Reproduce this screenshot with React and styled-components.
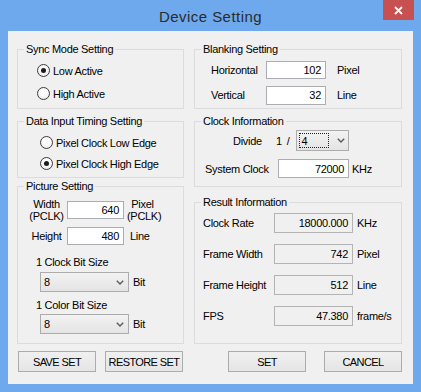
import React from 'react'
import styled, { createGlobalStyle } from 'styled-components'

const GlobalStyle = createGlobalStyle`
html, body {
  margin: 0;
  padding: 0;
  background: #6ea9ee;
}
body {
  font-family: "Liberation Sans", Arial, sans-serif;
  font-size: 11px;
  letter-spacing: -0.3px;
  color: #000;
}
`

const Window = styled.div`
width: 421px;
height: 392px;
box-sizing: border-box;
background: #6ea9ee;
padding: 0 8px 8px;
display: flex;
flex-direction: column;
`

const TitleBar = styled.div`
height: 31px;
display: grid;
grid-template-columns: 1fr auto 1fr;
`

const Title = styled.div`
grid-column: 2;
align-self: center;
margin-top: 1px;
font-size: 15px;
letter-spacing: 0.45px;
color: #2b2b2b;
`

const CloseButton = styled.div`
grid-column: 3;
justify-self: end;
align-self: start;
margin-right: -1px;
width: 31px;
height: 20px;
background: #c75050;
display: flex;
align-items: center;
justify-content: center;
`

const Client = styled.div`
flex: 1;
background: #f0f0f0;
padding: 18px 11px 0 9px;
display: grid;
grid-template-columns: 167px 208px;
column-gap: 10px;
align-content: start;
`

const Column = styled.div`
display: flex;
flex-direction: column;
`

const Group = styled.div`
box-sizing: border-box;
height: ${p => p.$h}px;
margin-bottom: ${p => p.$mb || 0}px;
border: 1px solid #dcdcdc;
`

const Legend = styled.div`
display: table;
margin: -7px 0 0 6px;
padding: 0 2px;
line-height: 13px;
background: #f0f0f0;
`

const RadioList = styled.div`
display: flex;
flex-direction: column;
padding: ${p => p.$pt}px 0 0 ${p => p.$pl}px;
`

const RadioRow = styled.div`
display: flex;
align-items: center;
gap: 3px;
height: ${p => p.$h}px;
`

const RadioCircle = styled.span`
box-sizing: border-box;
width: 13px;
height: 13px;
border-radius: 50%;
border: 1px solid #3c3c3c;
background: radial-gradient(circle at 50% 40%, #ffffff 30%, #e3e3e3 100%);
display: flex;
align-items: center;
justify-content: center;

&::after {
  content: '';
  display: ${p => (p.$on ? 'block' : 'none')};
  width: 5px;
  height: 5px;
  border-radius: 50%;
  background: #1c1c1c;
}
`

const FormGrid = styled.div`
display: grid;
grid-template-columns: ${p => p.$cols};
grid-auto-rows: ${p => p.$rows};
row-gap: ${p => p.$rg}px;
align-items: center;
padding: ${p => p.$pt}px 0 0 ${p => p.$pl}px;
`

const Label = styled.div`
line-height: 12px;
text-align: ${p => p.$align || 'left'};
padding-left: ${p => p.$pl || 0}px;
`

const Field = styled.div`
box-sizing: border-box;
width: ${p => p.$w}px;
height: ${p => p.$h}px;
border: 1px solid ${p => (p.$ro ? '#b4b4b4' : '#abadb3')};
background: ${p => (p.$ro ? '#f0f0f0' : '#ffffff')};
display: flex;
align-items: center;
justify-content: flex-end;
padding-right: 4px;
`

const SubLabel = styled.div`
line-height: 14px;
margin-top: ${p => p.$mt}px;
padding-left: 18px;
`

const ComboRow = styled.div`
display: flex;
align-items: center;
gap: 4px;
margin-top: ${p => p.$mt}px;
padding-left: 22px;
`

const Combo = styled.div`
box-sizing: border-box;
width: ${p => p.$w}px;
height: ${p => p.$h}px;
border: 1px solid #acacac;
background: linear-gradient(#f2f2f2, #e4e4e4);
display: flex;
align-items: center;
justify-content: space-between;
padding: 0 ${p => p.$pr}px 0 ${p => p.$pl}px;
`

const FocusBox = styled.span`
box-sizing: border-box;
width: 30px;
height: 15px;
border: 1px dotted #222;
display: flex;
align-items: center;
padding-left: 2px;
`

const Row = styled.div`
display: flex;
align-items: center;
height: ${p => p.$h}px;
margin-top: ${p => p.$mt}px;
padding-left: ${p => p.$pl}px;
`

const Text = styled.span`
margin-left: ${p => p.$ml || 0}px;
width: ${p => (p.$w ? `${p.$w}px` : 'auto')};
flex: none;
`

const ButtonBar = styled.div`
grid-column: ${p => p.$col};
display: flex;
justify-content: ${p => p.$justify};
gap: ${p => p.$gap}px;
margin-top: 7px;
padding-left: ${p => p.$pl || 0}px;
`

const Button = styled.div`
box-sizing: border-box;
width: 78px;
height: 21px;
border: 1px solid #acacac;
background: linear-gradient(#f0f0f0, #e5e5e5);
display: flex;
align-items: center;
justify-content: center;
letter-spacing: -0.6px;
`

const Chevron = () => (
  <svg width="8" height="5" viewBox="0 0 8 5">
    <path d="M0.8 0.8 L4 4 L7.2 0.8" fill="none" stroke="#5a5a5a" strokeWidth="1.4" />
  </svg>
)

const Radio = ({ on, h, children }) => (
  <RadioRow $h={h}>
    <RadioCircle $on={on} />
    <span>{children}</span>
  </RadioRow>
)

const resultRows = [
  ['Clock Rate', '18000.000', 'KHz'],
  ['Frame Width', '742', 'Pixel'],
  ['Frame Height', '512', 'Line'],
  ['FPS', '47.380', 'frame/s'],
]

const App = () => (
  <Window>
    <GlobalStyle />
    <TitleBar>
      <Title>Device Setting</Title>
      <CloseButton>
        <svg width="9" height="9" viewBox="0 0 9 9">
          <path d="M1 1 L8 8 M8 1 L1 8" stroke="#fff" strokeWidth="1.8" />
        </svg>
      </CloseButton>
    </TitleBar>
    <Client>
      <Column>
        <Group $h={60} $mb={12}>
          <Legend>Sync Mode Setting</Legend>
          <RadioList $pt={3} $pl={19}>
            <Radio on h={23}>Low Active</Radio>
            <Radio h={23}>High Active</Radio>
          </RadioList>
        </Group>
        <Group $h={57} $mb={8}>
          <Legend>Data Input Timing Setting</Legend>
          <RadioList $pt={4} $pl={22}>
            <Radio h={21}>Pixel Clock Low Edge</Radio>
            <Radio on h={21}>Pixel Clock High Edge</Radio>
          </RadioList>
        </Group>
        <Group $h={158}>
          <Legend>Picture Setting</Legend>
          <FormGrid $cols="41px 60px 31px" $rows="auto" $rg={5} $pt={5} $pl={8}>
            <Label $align="center">Width<br />(PCLK)</Label>
            <Field $w={57} $h={18}>640</Field>
            <Label $align="center">Pixel<br />(PCLK)</Label>
            <Label $align="center">Height</Label>
            <Field $w={57} $h={18}>480</Field>
            <Label $pl={3}>Line</Label>
          </FormGrid>
          <SubLabel $mt={10}>1 Clock Bit Size</SubLabel>
          <ComboRow $mt={3}>
            <Combo $w={89} $h={20} $pl={3} $pr={4}>
              <span>8</span>
              <Chevron />
            </Combo>
            <span>Bit</span>
          </ComboRow>
          <SubLabel $mt={6}>1 Color Bit Size</SubLabel>
          <ComboRow $mt={2}>
            <Combo $w={89} $h={20} $pl={3} $pr={4}>
              <span>8</span>
              <Chevron />
            </Combo>
            <span>Bit</span>
          </ComboRow>
        </Group>
      </Column>

      <Column>
        <Group $h={60} $mb={12}>
          <Legend>Blanking Setting</Legend>
          <FormGrid $cols="55px 60px auto" $rows="18px" $rg={7} $pt={5} $pl={16}>
            <Label>Horizontal</Label>
            <Field $w={60} $h={18}>102</Field>
            <Label $pl={11}>Pixel</Label>
            <Label>Vertical</Label>
            <Field $w={60} $h={19}>32</Field>
            <Label $pl={11}>Line</Label>
          </FormGrid>
        </Group>
        <Group $h={66} $mb={15}>
          <Legend>Clock Information</Legend>
          <Row $h={21} $mt={2} $pl={38}>
            <Text $w={29}>Divide</Text>
            <Text $ml={14}>1</Text>
            <Text $ml={5}>/</Text>
            <Combo $w={53} $h={21} $pl={2} $pr={3} style={{ marginLeft: 6 }}>
              <FocusBox>4</FocusBox>
              <Chevron />
            </Combo>
          </Row>
          <Row $h={19} $mt={8} $pl={10}>
            <Text $w={73}>System Clock</Text>
            <Field $w={71} $h={19}>72000</Field>
            <Text $ml={3}>KHz</Text>
          </Row>
        </Group>
        <Group $h={142}>
          <Legend>Result Information</Legend>
          <FormGrid $cols="71px 79px auto" $rows="20px" $rg={11} $pt={4} $pl={8}>
            {resultRows.map(([label, value, unit]) => (
              <React.Fragment key={label}>
                <Label>{label}</Label>
                <Field $ro $w={79} $h={20}>{value}</Field>
                <Label $pl={4}>{unit}</Label>
              </React.Fragment>
            ))}
          </FormGrid>
        </Group>
      </Column>

      <ButtonBar $col={1} $justify="flex-start" $gap={9} $pl={1}>
        <Button>SAVE SET</Button>
        <Button>RESTORE SET</Button>
      </ButtonBar>
      <ButtonBar $col={2} $justify="flex-end" $gap={18}>
        <Button>SET</Button>
        <Button>CANCEL</Button>
      </ButtonBar>
    </Client>
  </Window>
)

export default App
